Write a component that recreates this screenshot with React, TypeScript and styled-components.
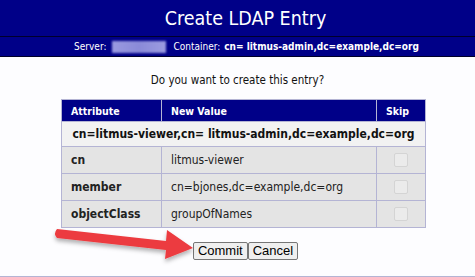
import React from "react";
import styled, { createGlobalStyle } from "styled-components";

const Global = createGlobalStyle`
  html, body { margin: 0; padding: 0; background: #fdfdff; }
  body { font-family: "DejaVu Sans Condensed", "Noto Sans", sans-serif; width: 475px; height: 277px; overflow: hidden; }
`;

const Page = styled.div`
  width: 475px;
  height: 277px;
  display: flex;
  flex-direction: column;
  position: relative;
  border-bottom: 1px solid #b4b4d4;
  box-sizing: border-box;
`;

const TitleBar = styled.div`
  height: 36px;
  background: #000088;
  color: #fff;
  display: flex;
  align-items: center;
  justify-content: center;
  padding-left: 16px;
  font-family: "DejaVu Sans Condensed", "DejaVu Sans", sans-serif;
  font-size: 19.5px;
  border-bottom: 1px solid #00002a;
`;

const InfoBar = styled.div`
  height: 19px;
  background: #000088;
  color: #fff;
  display: flex;
  align-items: center;
  justify-content: center;
  gap: 7px;
  padding-left: 18px;
  font-size: 10px;
  border-bottom: 1px solid #00002a;
`;

const Blur = styled.span`
  display: inline-block;
  width: 54px;
  height: 12px;
  background: linear-gradient(90deg, #9a9ae0, #8a8ad8 50%, #9c9ce0);
  filter: blur(1px);
  margin-left: 2px;
`;

const Label = styled.span`
  display: inline-flex;
  align-items: center;
  gap: 4px;
`;

const Strong = styled.b`
  font-weight: bold;
  font-size: 10px;
`;

const Main = styled.div`
  flex: 1;
  display: flex;
  flex-direction: column;
  align-items: center;
`;

const Question = styled.div`
  margin-top: 16px;
  font-size: 11.5px;
  color: #111;
  height: 14px;
  line-height: 14px;
`;

const Table = styled.table`
  margin-top: 12px;
  margin-left: 12px;
  border-collapse: collapse;
  table-layout: fixed;
  width: 365px;
  font-size: 11px;
  border: 1px solid #b4b4d4;
`;

const Th = styled.th<{ $w?: number }>`
  box-sizing: border-box;
  background: #000088;
  color: #fff;
  text-align: left;
  font-weight: bold;
  font-size: 10.5px;
  height: 22px;
  padding: 0 0 0 9px;
  border: 1px solid #b4b4d4;
  width: ${(p) => (p.$w ? `${p.$w}px` : "auto")};
`;

const DnCell = styled.td`
  background: #f2f2f2;
  text-align: center;
  font-weight: bold;
  font-size: 12px;
  height: 22px;
  color: #111;
  white-space: nowrap;
  border: 1px solid #b4b4d4;
`;

const Td = styled.td<{ $bold?: boolean }>`
  background: #e4e4e4;
  height: 26px;
  padding: 0 0 0 9px;
  color: #222;
  font-size: 12px;
  font-weight: ${(p) => (p.$bold ? "bold" : "normal")};
  border: 1px solid #b4b4d4;
`;

const SkipTd = styled.td`
  background: #e4e4e4;
  text-align: center;
  border: 1px solid #b4b4d4;
`;

const Check = styled.span`
  display: inline-block;
  width: 12px;
  height: 12px;
  border: 1px solid #d4d4d4;
  border-radius: 2px;
  background: #ebebeb;
  vertical-align: middle;
`;

const Buttons = styled.div`
  margin-top: 14px;
  display: flex;
  margin-left: 16px;
`;

const Button = styled.button`
  font-family: "Liberation Sans", Arial, sans-serif;
  font-size: 13px;
  height: 18px;
  padding: 0 4px;
  background: #efefef;
  border: 1px solid #767676;
  border-radius: 2px;
  color: #000;
  line-height: 14px;
`;

const Arrow = styled.svg`
  position: absolute;
  left: 50px;
  top: 224px;
  width: 150px;
  height: 44px;
  overflow: visible;
`;

const rows = [
  { attr: "cn", val: "litmus-viewer" },
  { attr: "member", val: "cn=bjones,dc=example,dc=org" },
  { attr: "objectClass", val: "groupOfNames" },
];

export default function App() {
  return (
    <>
      <Global />
      <Page>
        <TitleBar>Create LDAP Entry</TitleBar>
        <InfoBar>
          <Label>
            Server: <Blur />
          </Label>
          <Label>
            Container: <Strong>cn= litmus-admin,dc=example,dc=org</Strong>
          </Label>
        </InfoBar>
        <Main>
          <Question>Do you want to create this entry?</Question>
          <Table>
            <thead>
              <tr>
                <Th $w={100}>Attribute</Th>
                <Th>New Value</Th>
                <Th $w={49}>Skip</Th>
              </tr>
            </thead>
            <tbody>
              <tr>
                <DnCell colSpan={3}>cn=litmus-viewer,cn= litmus-admin,dc=example,dc=org</DnCell>
              </tr>
              {rows.map((r) => (
                <tr key={r.attr}>
                  <Td $bold>{r.attr}</Td>
                  <Td>{r.val}</Td>
                  <SkipTd>
                    <Check />
                  </SkipTd>
                </tr>
              ))}
            </tbody>
          </Table>
          <Buttons>
            <Button>Commit</Button>
            <Button>Cancel</Button>
          </Buttons>
        </Main>
        <Arrow viewBox="50 224 150 44">
          <defs>
            <filter id="sh" x="-20%" y="-50%" width="140%" height="200%">
              <feDropShadow dx="0" dy="3" stdDeviation="2" floodColor="#000" floodOpacity="0.3" />
            </filter>
          </defs>
          <path
            d="M57 229 L166 241 L167 230 L193 248 L165 259 L166 250 L57 238 Q53 233.5 57 229 Z"
            fill="#ec3b3f"
            filter="url(#sh)"
          />
        </Arrow>
      </Page>
    </>
  );
}
